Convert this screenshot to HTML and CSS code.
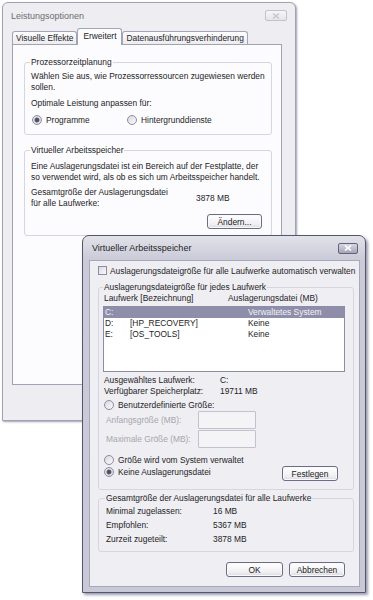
FILE: index.html
```html
<!DOCTYPE html>
<html lang="de">

<head>
  <meta charset="UTF-8">
  <meta name="viewport" content="width=device-width, initial-scale=1.0">
  <title>Leistungsoptionen</title>
  <link rel="stylesheet" href="styles.css">
</head>

<body>
  <div class="desktop">

    <!-- hinteres Fenster -->
    <div class="window back">
      <div class="titlebar">
        <span class="title">Leistungsoptionen</span>
        <span class="close">
          <svg width="8" height="6" viewBox="0 0 8 6"><path d="M1 0.5 L7 5.5 M7 0.5 L1 5.5" stroke="#c4c4cc" stroke-width="1.3"/></svg>
        </span>
      </div>

      <div class="tabs">
        <div class="tab">Visuelle Effekte</div>
        <div class="tab active">Erweitert</div>
        <div class="tab">Datenausführungsverhinderung</div>
      </div>

      <div class="panel">
        <div class="group cpu">
          <div class="group-title">Prozessorzeitplanung</div>
          <p class="lines">Wählen Sie aus, wie Prozessorressourcen zugewiesen werden<br>sollen.</p>
          <p class="lines adjust">Optimale Leistung anpassen für:</p>
          <div class="radio-pair">
            <label class="radio first"><span class="dot checked"></span>Programme</label>
            <label class="radio"><span class="dot"></span>Hintergrunddienste</label>
          </div>
        </div>

        <div class="group vm">
          <div class="group-title">Virtueller Arbeitsspeicher</div>
          <p class="lines">Eine Auslagerungsdatei ist ein Bereich auf der Festplatte, der<br>so verwendet wird, als ob es sich um Arbeitsspeicher handelt.</p>
          <div class="total">
            <span class="total-label">Gesamtgröße der Auslagerungsdatei<br>für alle Laufwerke:</span>
            <span>3878 MB</span>
          </div>
          <div class="button-row">
            <button class="btn change">Ändern...</button>
          </div>
        </div>
      </div>
    </div>

    <!-- vorderes Fenster -->
    <div class="window front">
      <div class="titlebar">
        <span class="title">Virtueller Arbeitsspeicher</span>
        <span class="close">
          <svg width="8" height="6" viewBox="0 0 8 6"><path d="M1 0.5 L7 5.5 M7 0.5 L1 5.5" stroke="#ffffff" stroke-width="1.6"/></svg>
        </span>
      </div>

      <div class="content">
        <label class="check-row"><span class="box"></span>Auslagerungsdateigröße für alle Laufwerke automatisch verwalten</label>

        <div class="group drives">
          <div class="group-title">Auslagerungsdateigröße für jedes Laufwerk</div>
          <div class="list-head">
            <span class="head-drive">Laufwerk [Bezeichnung]</span>
            <span>Auslagerungsdatei (MB)</span>
          </div>
          <ul class="drive-list">
            <li class="selected"><span class="c-drive">C:</span><span class="c-label"></span><span>Verwaltetes System</span></li>
            <li><span class="c-drive">D:</span><span class="c-label">[HP_RECOVERY]</span><span>Keine</span></li>
            <li><span class="c-drive">E:</span><span class="c-label">[OS_TOOLS]</span><span>Keine</span></li>
          </ul>

          <div class="info">
            <div><span class="info-label">Ausgewähltes Laufwerk:</span><span>C:</span></div>
            <div><span class="info-label">Verfügbarer Speicherplatz:</span><span>19711 MB</span></div>
          </div>

          <label class="radio custom"><span class="dot"></span>Benutzerdefinierte Größe:</label>
          <div class="size-row">
            <span class="size-label">Anfangsgröße (MB):</span>
            <span class="field"></span>
          </div>
          <div class="size-row second">
            <span class="size-label">Maximale Größe (MB):</span>
            <span class="field"></span>
          </div>
          <label class="radio system"><span class="dot"></span>Größe wird vom System verwaltet</label>
          <div class="none-row">
            <label class="radio"><span class="dot checked"></span>Keine Auslagerungsdatei</label>
            <button class="btn set">Festlegen</button>
          </div>
        </div>

        <div class="group totals">
          <div class="group-title">Gesamtgröße der Auslagerungsdatei für alle Laufwerke</div>
          <div class="total-row"><span class="total-name">Minimal zugelassen:</span><span>16 MB</span></div>
          <div class="total-row"><span class="total-name">Empfohlen:</span><span>5367 MB</span></div>
          <div class="total-row"><span class="total-name">Zurzeit zugeteilt:</span><span>3878 MB</span></div>
        </div>

        <div class="dialog-buttons">
          <button class="btn ok">OK</button>
          <button class="btn cancel">Abbrechen</button>
        </div>
      </div>
    </div>

  </div>
</body>
</html>
```

FILE: styles.css
```css
* {
  box-sizing: border-box;
}

body {
  margin: 0;
  background-color: #fff;
  font-family: 'Liberation Sans', Arial, sans-serif;
  font-size: 8.4px;
  color: #242426;
}

p {
  margin: 0;
}

.desktop {
  position: relative;
  width: 373px;
  height: 600px;
  overflow: hidden;
}

.window {
  position: absolute;
}

/* ---------- hinteres Fenster ---------- */

.back {
  left: 2px;
  top: 2px;
  width: 294px;
  height: 419px;
  background-color: #eeedf1;
  border: 1px solid #a2a2b4;
  border-radius: 6px 6px 0 0;
  box-shadow: 1px 1px 2px rgba(70, 70, 100, 0.5);
  padding: 0 13px 0 9px;
}

.back .titlebar {
  height: 25px;
  margin: 0 -13px 0 -9px;
  padding: 0 8px 0 8px;
  display: flex;
  align-items: center;
  justify-content: space-between;
}

.back .title {
  font-size: 9px;
  color: #6c6c70;
}

.back .close {
  width: 22px;
  height: 11px;
  border: 1px solid #c2c2cc;
  border-radius: 2px;
  display: flex;
  align-items: center;
  justify-content: center;
  background: linear-gradient(#f6f6f8, #e6e6ea);
}

.tabs {
  display: flex;
  align-items: flex-end;
  height: 16px;
}

.tab {
  height: 13px;
  padding: 0 3px;
  line-height: 12px;
  border: 1px solid #a4a4b8;
  border-bottom: none;
  border-radius: 3px 3px 0 0;
  background: linear-gradient(#fdfdfe, #ececf0);
  white-space: nowrap;
}

.tab.active {
  position: relative;
  z-index: 1;
  height: 17px;
  margin-bottom: -1px;
  padding: 0 5px;
  line-height: 15px;
  background: #fcfcfe;
}

.panel {
  height: 341px;
  background-color: #fcfcfe;
  border: 1px solid #a2a2b6;
  padding: 17px 9px 0 11px;
}

.group {
  border: 1px solid #d6d6e0;
  border-radius: 3px;
}

.group-title {
  width: fit-content;
  margin: -6px 0 0 -1px;
  padding: 0 1px;
  line-height: 11px;
  background-color: #fcfcfe;
  white-space: nowrap;
}

.lines {
  line-height: 11px;
  white-space: nowrap;
}

.cpu {
  padding: 0 6px 8px;
}

.cpu .lines {
  margin-top: 3px;
}

.cpu .adjust {
  margin-top: 5px;
}

.radio-pair {
  display: flex;
  margin-top: 5px;
}

.radio {
  display: flex;
  align-items: center;
  height: 12px;
  white-space: nowrap;
}

.radio-pair .first {
  width: 96px;
  padding-left: 1px;
}

.dot {
  width: 10px;
  height: 10px;
  margin-right: 4px;
  border: 1px solid #8c8ca4;
  border-radius: 50%;
  background: linear-gradient(135deg, #d8d8e0, #fbfbfc);
  flex-shrink: 0;
}

.dot.checked {
  background: radial-gradient(circle, #46464e 0, #5c5c66 2px, #d6d6de 2.8px, #f6f6f8 100%);
}

.vm {
  margin-top: 15px;
  padding: 0 6px 6px;
}

.vm .lines {
  margin-top: 5px;
}

.total {
  display: flex;
  align-items: center;
  margin-top: 4px;
  line-height: 11px;
}

.total-label {
  width: 165px;
}

.button-row {
  display: flex;
  justify-content: flex-end;
  margin-top: 5px;
  padding-right: 3px;
}

.btn {
  height: 15px;
  padding: 0;
  font: inherit;
  color: #202024;
  border: 1px solid #6c6c84;
  border-radius: 3px;
  background: linear-gradient(#ffffff, #f0f0f3 70%, #d8d8e0);
  box-shadow: inset 0 0 0 1px #fafafc;
}

.change {
  width: 55px;
}

/* ---------- vorderes Fenster ---------- */

.front {
  left: 82px;
  top: 235px;
  width: 284px;
  height: 358px;
  border: 1px solid #55556c;
  border-radius: 7px 7px 0 0;
  background: linear-gradient(#e2e2ea, #cacad8 24px, #c8c8d6);
  box-shadow: 2px 2px 3px rgba(70, 70, 110, 0.55);
  padding: 0 5px 5px 6px;
  display: flex;
  flex-direction: column;
}

.front .titlebar {
  height: 24px;
  flex-shrink: 0;
  padding: 0 2px 0 3px;
  display: flex;
  align-items: center;
  justify-content: space-between;
}

.front .title {
  font-size: 9px;
  color: #1e1e24;
}

.front .close {
  width: 20px;
  height: 11px;
  border: 1px solid #62627a;
  border-radius: 2px;
  display: flex;
  align-items: center;
  justify-content: center;
  background: linear-gradient(#d8d8e2, #a4a4b8);
}

.content {
  flex: 1;
  background-color: #efeef3;
  border: 1px solid #a8a8bc;
  padding: 4px 5px 0 8px;
}

.content .group-title {
  background-color: #efeef3;
}

.check-row {
  display: flex;
  align-items: center;
  height: 11px;
  white-space: nowrap;
}

.box {
  width: 9px;
  height: 9px;
  margin-right: 3px;
  border: 1px solid #8c8ca4;
  background: linear-gradient(135deg, #d8d8e0, #fbfbfc);
  flex-shrink: 0;
}

.drives {
  margin-top: 11px;
  padding: 0 0 7px 5px;
}

.list-head {
  display: flex;
  line-height: 11px;
  white-space: nowrap;
}

.head-drive {
  width: 124px;
}

.drive-list {
  list-style-type: none;
  height: 66px;
  margin: 2px 8px 0 -1px;
  padding: 0;
  background-color: #fff;
  border: 1px solid #8c8ca6;
}

.drive-list li {
  display: flex;
  height: 11px;
  line-height: 11px;
  padding-left: 1px;
  white-space: nowrap;
}

.drive-list li.selected {
  background-color: #8e8eaa;
  color: #f2f2f8;
}

.c-drive {
  width: 25px;
}

.c-label {
  width: 118px;
}

.info {
  margin-top: 3px;
  line-height: 11px;
}

.info div {
  display: flex;
}

.info-label {
  width: 116px;
}

.custom {
  margin-top: 2px;
}

.size-row {
  display: flex;
  align-items: center;
  padding-left: 2px;
  color: #a6a6ae;
}

.size-row.second {
  margin-top: 1px;
}

.size-label {
  width: 92px;
}

.field {
  width: 58px;
  height: 18px;
  border: 1px solid #c2c2ce;
  border-radius: 1px;
  background-color: #f4f4f6;
}

.system {
  margin-top: 6px;
}

.none-row {
  display: flex;
  justify-content: space-between;
  align-items: flex-start;
  height: 16px;
}

.set {
  width: 56px;
  margin-right: 15px;
}

.totals {
  margin-top: 8px;
  padding: 0 0 5px 7px;
}

.total-row {
  display: flex;
  line-height: 14px;
}

.total-row:first-of-type {
  margin-top: 2px;
}

.total-name {
  width: 107px;
}

.dialog-buttons {
  display: flex;
  justify-content: flex-end;
  gap: 6px;
  margin-top: 10px;
  padding-right: 9px;
}

.ok {
  width: 57px;
}

.cancel {
  width: 56px;
}
```
